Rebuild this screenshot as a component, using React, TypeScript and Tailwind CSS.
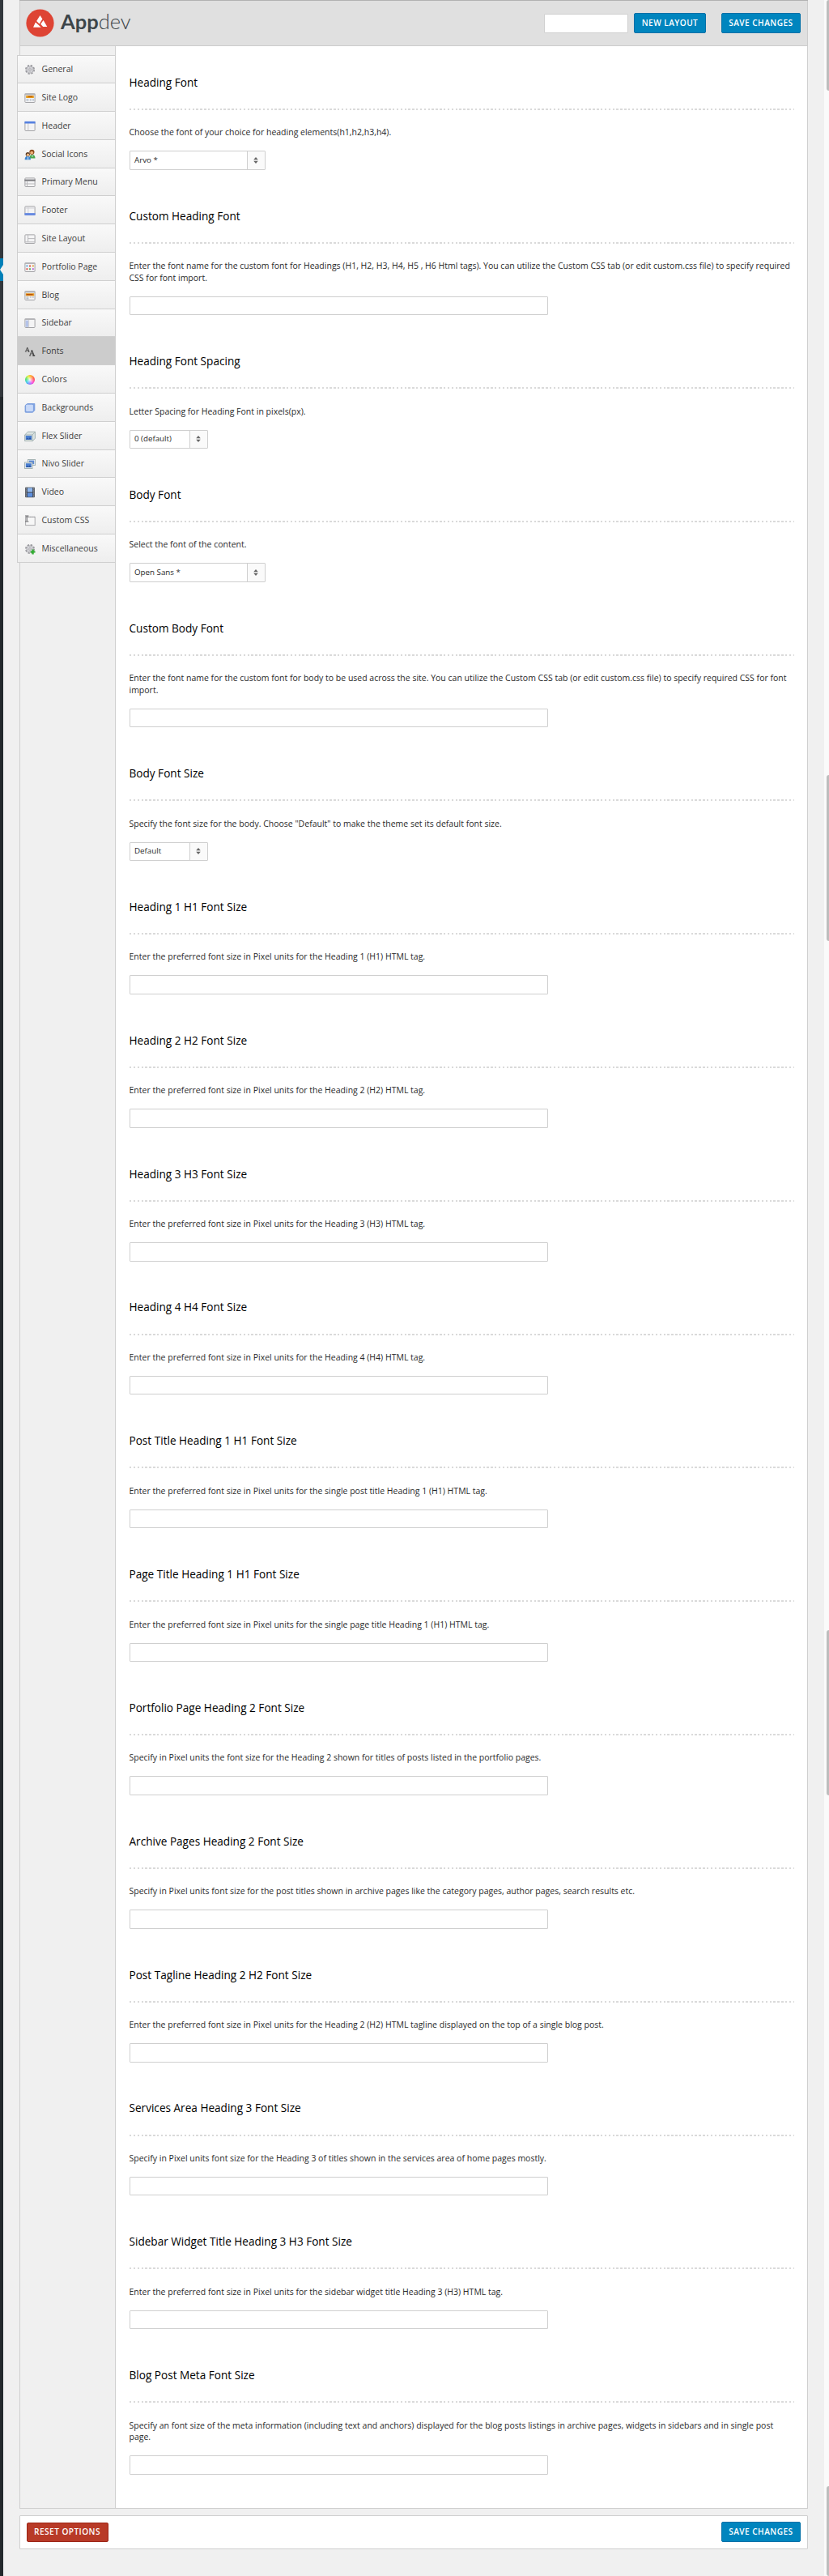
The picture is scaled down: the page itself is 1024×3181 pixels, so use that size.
import type { ReactNode } from "react";

type Section = {
  title: string;
  lines: string[];
  select?: string;
  wide?: boolean;
};

const sections: Section[] = [
  { title: "Heading Font", lines: ["Choose the font of your choice for heading elements(h1,h2,h3,h4)."], select: "Arvo *", wide: true },
  {
    title: "Custom Heading Font",
    lines: [
      "Enter the font name for the custom font for Headings (H1, H2, H3, H4, H5 , H6 Html tags). You can utilize the Custom CSS tab (or edit custom.css file) to specify required",
      "CSS for font import.",
    ],
  },
  { title: "Heading Font Spacing", lines: ["Letter Spacing for Heading Font in pixels(px)."], select: "0 (default)" },
  { title: "Body Font", lines: ["Select the font of the content."], select: "Open Sans *", wide: true },
  {
    title: "Custom Body Font",
    lines: [
      "Enter the font name for the custom font for body to be used across the site. You can utilize the Custom CSS tab (or edit custom.css file) to specify required CSS for font",
      "import.",
    ],
  },
  { title: "Body Font Size", lines: ['Specify the font size for the body. Choose "Default" to make the theme set its default font size.'], select: "Default" },
  { title: "Heading 1 H1 Font Size", lines: ["Enter the preferred font size in Pixel units for the Heading 1 (H1) HTML tag."] },
  { title: "Heading 2 H2 Font Size", lines: ["Enter the preferred font size in Pixel units for the Heading 2 (H2) HTML tag."] },
  { title: "Heading 3 H3 Font Size", lines: ["Enter the preferred font size in Pixel units for the Heading 3 (H3) HTML tag."] },
  { title: "Heading 4 H4 Font Size", lines: ["Enter the preferred font size in Pixel units for the Heading 4 (H4) HTML tag."] },
  { title: "Post Title Heading 1 H1 Font Size", lines: ["Enter the preferred font size in Pixel units for the single post title Heading 1 (H1) HTML tag."] },
  { title: "Page Title Heading 1 H1 Font Size", lines: ["Enter the preferred font size in Pixel units for the single page title Heading 1 (H1) HTML tag."] },
  { title: "Portfolio Page Heading 2 Font Size", lines: ["Specify in Pixel units the font size for the Heading 2 shown for titles of posts listed in the portfolio pages."] },
  { title: "Archive Pages Heading 2 Font Size", lines: ["Specify in Pixel units font size for the post titles shown in archive pages like the category pages, author pages, search results etc."] },
  { title: "Post Tagline Heading 2 H2 Font Size", lines: ["Enter the preferred font size in Pixel units for the Heading 2 (H2) HTML tagline displayed on the top of a single blog post."] },
  { title: "Services Area Heading 3 Font Size", lines: ["Specify in Pixel units font size for the Heading 3 of titles shown in the services area of home pages mostly."] },
  { title: "Sidebar Widget Title Heading 3 H3 Font Size", lines: ["Enter the preferred font size in Pixel units for the sidebar widget title Heading 3 (H3) HTML tag."] },
  {
    title: "Blog Post Meta Font Size",
    lines: [
      "Specify an font size of the meta information (including text and anchors) displayed for the blog posts listings in archive pages, widgets in sidebars and in single post",
      "page.",
    ],
  },
];

function Svg({ children }: { children: ReactNode }) {
  return (
    <svg viewBox="0 0 14 14" className="h-3.5 w-3.5 shrink-0">
      {children}
    </svg>
  );
}

/* Small window outline shared by most of the menu icons */
function Frame({ children }: { children?: ReactNode }) {
  return (
    <Svg>
      <rect x="0.9" y="1.9" width="12.2" height="10.6" rx="0.8" fill="#f4f4f5" stroke="#a3a3a6" />
      {children}
    </Svg>
  );
}

function Gear() {
  return (
    <>
      <circle cx="7" cy="7" r="5.2" fill="none" stroke="#98989d" strokeWidth="1.6" strokeDasharray="2.4 1.7" />
      <circle cx="7" cy="7" r="4.1" fill="#dcdce0" stroke="#9a9a9f" strokeWidth="0.8" />
      <circle cx="7" cy="7" r="2.6" fill="none" stroke="#b4b4b8" strokeWidth="0.8" strokeDasharray="1.4 0.8" />
      <circle cx="7" cy="7" r="1.3" fill="#f4f4f4" stroke="#8e8e93" strokeWidth="0.7" />
    </>
  );
}

function ColorWheel() {
  return (
    <span className="block h-3.5 w-3.5 shrink-0 p-[1px]">
      <span className="block h-full w-full rounded-full bg-[radial-gradient(circle,rgba(255,255,255,0.9)_0%,rgba(255,255,255,0.15)_60%,rgba(255,255,255,0)_100%),conic-gradient(#ffb000,#ff3b30_20%,#ff2bd6_38%,#8a5bff_50%,#22c3f0_64%,#2fdc5a_78%,#d8ee20_92%,#ffb000)]" />
    </span>
  );
}

const menu: { label: string; icon: ReactNode }[] = [
  { label: "General", icon: <Svg><Gear /></Svg> },
  {
    label: "Site Logo",
    icon: (
      <Frame>
        <rect x="0.6" y="1.4" width="12.8" height="2" fill="#b4b4b7" />
        <rect x="2.2" y="4" width="9.6" height="3" fill="#e49a1c" />
        <rect x="5" y="4.6" width="5" height="1.4" fill="#c4650e" />
        <path d="M2.4 8.5h3M2.4 10.4h3M6.8 8.5h2M10 8.5h2M6.8 10.4h2M10 10.4h2" stroke="#aeb8c6" />
      </Frame>
    ),
  },
  {
    label: "Header",
    icon: (
      <Frame>
        <path d="M4.8 3v9.5" stroke="#c6c6ca" />
        <rect x="0.4" y="0.9" width="13.2" height="2.6" fill="#5580e0" />
      </Frame>
    ),
  },
  {
    label: "Social Icons",
    icon: (
      <Svg>
        <path d="M6.6 11.5c0-3.5 1.2-4.6 3.2-4.6s3.7 1.2 3.7 4.6z" fill="#4aa64e" />
        <circle cx="9.4" cy="3.8" r="3.1" fill="#8b4a1b" />
        <circle cx="9.2" cy="4.6" r="1.9" fill="#efb27a" />
        <path d="M0.6 13.2c0-3 1.2-4.5 3.6-4.5s3.8 1.5 3.8 4.5z" fill="#3f86d0" />
        <circle cx="4.3" cy="6.6" r="2.6" fill="#5a3a20" />
        <circle cx="4.5" cy="7.2" r="1.7" fill="#efbb86" />
        <path d="M4.6 9.3v3.6M10 7.4v2.4" stroke="#e9f3fb" strokeWidth="0.9" />
      </Svg>
    ),
  },
  {
    label: "Primary Menu",
    icon: (
      <Frame>
        <rect x="0.4" y="3.6" width="13.2" height="2" fill="#77777b" />
        <path d="M3.5 6v6.5M1 9h12" stroke="#b9b9bc" />
      </Frame>
    ),
  },
  {
    label: "Footer",
    icon: (
      <Frame>
        <path d="M4.8 2v9M1 4h12" stroke="#d2d2d6" />
        <rect x="0.4" y="10.1" width="13.2" height="2.8" fill="#6589e2" />
      </Frame>
    ),
  },
  {
    label: "Site Layout",
    icon: (
      <Frame>
        <path d="M4.6 2v8.6M4.6 6.6h8.4M1 10.8h12" stroke="#b9b9bc" />
      </Frame>
    ),
  },
  {
    label: "Portfolio Page",
    icon: (
      <Frame>
        <rect x="0.6" y="1.4" width="12.8" height="1.6" fill="#b4b4b7" />
        <path d="M2.4 5.4h2" stroke="#5da7d8" strokeWidth="2" />
        <path d="M6 5.4h2M2.4 9.2h2" stroke="#e25045" strokeWidth="2" />
        <path d="M9.8 5.4h2" stroke="#e3a13b" strokeWidth="2" />
        <path d="M6 9.2h2" stroke="#58b368" strokeWidth="2" />
        <path d="M9.8 9.2h2" stroke="#b765cf" strokeWidth="2" />
      </Frame>
    ),
  },
  {
    label: "Blog",
    icon: (
      <Frame>
        <rect x="0.6" y="1.4" width="12.8" height="2" fill="#b4b4b7" />
        <rect x="1.8" y="4.2" width="10.4" height="3.2" fill="#e79a20" />
        <rect x="2.6" y="5" width="8" height="1.4" fill="#b8520c" />
        <path d="M2.4 9h3M2.4 10.8h3M6.8 9h1.8M9.8 9h2" stroke="#9fa8b5" />
      </Frame>
    ),
  },
  {
    label: "Sidebar",
    icon: (
      <Frame>
        <rect x="0.6" y="1.4" width="12.8" height="1.6" fill="#b4b4b7" />
        <rect x="1.6" y="3.6" width="3.4" height="8.2" fill="#b4c3e8" />
        <path d="M5.6 3v9.4" stroke="#c3c3c8" strokeWidth="0.8" />
      </Frame>
    ),
  },
  {
    label: "Fonts",
    icon: (
      <Svg>
        <g fill="none" stroke="#4a4a4a">
          <path d="M1.6 7L3.6 2.2M2.2 5.6h3M0.9 7.1h2" strokeWidth="0.8" />
          <path d="M3.5 2l2.1 5M4.4 7.1h2" strokeWidth="1.3" />
          <path d="M6.9 12L9.3 5.6M7.7 9.9h3.6M6.1 12.2h2.3" strokeWidth="0.9" />
          <path d="M9.2 5.2l2.6 6.8M10.2 12.2h3" strokeWidth="1.6" />
        </g>
      </Svg>
    ),
  },
  { label: "Colors", icon: <ColorWheel /> },
  {
    label: "Backgrounds",
    icon: (
      <Svg>
        <path d="M4 0.9h8.6l.7.7v8.2l-3 3H1.6l-1-1V3.9z" fill="#7fa2e0" />
        <rect x="1.6" y="2.2" width="9.8" height="9.4" rx="1.6" fill="#c8d9f8" stroke="#6f93d8" strokeWidth="0.7" />
      </Svg>
    ),
  },
  {
    label: "Flex Slider",
    icon: (
      <Svg>
        <path d="M4.5 1.2h8.9v8l-3 3.4H0.6V5z" fill="#dce4e2" stroke="#93a4a6" strokeWidth="0.8" />
        <path d="M10 5l3.4-3.6M10 5v7.4M0.8 5H10" stroke="#93a4a6" strokeWidth="0.7" />
        <rect x="1.7" y="6" width="7.4" height="5" fill="#4a7ed0" />
        <path d="M1.8 10.6l2-2 1.6 1.4 1.6-2 2 2.4z" fill="#2a56a2" />
      </Svg>
    ),
  },
  {
    label: "Nivo Slider",
    icon: (
      <Svg>
        <rect x="4.6" y="1.4" width="8.8" height="7.2" fill="#eef2f2" stroke="#93a4a6" strokeWidth="0.8" />
        <rect x="5.8" y="2.6" width="6.4" height="4.6" fill="#5e8ad2" />
        <rect x="0.6" y="5" width="9.4" height="7.6" fill="#eef2f2" stroke="#93a4a6" strokeWidth="0.8" />
        <rect x="1.8" y="6.2" width="7" height="5" fill="#4a7ed0" />
        <path d="M1.8 11l2-2 1.6 1.2 1.4-1.8 2 2.6z" fill="#2a56a2" />
      </Svg>
    ),
  },
  {
    label: "Video",
    icon: (
      <Svg>
        <rect x="1.2" y="0.8" width="11.6" height="12.4" rx="0.6" fill="#3f434b" />
        <rect x="3.8" y="1.4" width="6.4" height="5.2" fill="#8fb6ec" />
        <rect x="3.8" y="7.6" width="6.4" height="5" fill="#5d8fdc" />
        <path d="M2.5 1.6v11M11.5 1.6v11" stroke="#aeb3bb" strokeDasharray="1 1" />
      </Svg>
    ),
  },
  {
    label: "Custom CSS",
    icon: (
      <Svg>
        <rect x="1.6" y="2.4" width="11.6" height="10.2" fill="#f7f7f7" stroke="#aaaaad" />
        <path d="M5 2.4h8" stroke="#8f8f92" strokeDasharray="1 0.8" />
        <path d="M1 1h4.4M1 8h4.4M3.2 1v7" stroke="#6a6a6e" strokeWidth="1.1" />
      </Svg>
    ),
  },
  {
    label: "Miscellaneous",
    icon: (
      <Svg>
        <Gear />
        <path d="M10.6 7.6v5.8M7.7 10.5h5.8" stroke="#2cab2c" strokeWidth="2.2" />
      </Svg>
    ),
  },
];

function Select({ value, wide }: { value: string; wide?: boolean }) {
  return (
    <div
      className={
        "flex h-[23.5px] rounded-[1px] border border-[#cfcfcf] bg-white text-[9.75px] text-[#2a2a2a] " +
        (wide ? "w-[168.5px]" : "w-[97.5px]")
      }
    >
      <div className="flex flex-1 items-center pl-[5.5px]">{value}</div>
      <div className="flex w-[22.5px] items-center justify-center border-l border-[#cfcfcf] bg-[#fafafa]">
        <svg viewBox="0 0 6 8" className="h-2 w-1.5">
          <path d="M3 0l2.8 3.2H.2zM3 8L.2 4.8h5.6z" fill="#666" />
        </svg>
      </div>
    </div>
  );
}

function Button({ children, red }: { children: ReactNode; red?: boolean }) {
  return (
    <button
      className={
        "flex items-center justify-center rounded-[2px] border text-[10.1px] font-semibold tracking-[0.45px] whitespace-nowrap text-white " +
        (red
          ? "h-6 w-[101px] border-[#9c2415] bg-[#b83a27]"
          : "h-[25px] border-[#0070a8] bg-[#0085be] px-[8.5px]")
      }
    >
      {children}
    </button>
  );
}

function Thumb({ className }: { className: string }) {
  return <div className={"ml-[3px] shrink-0 rounded-l-[3px] bg-[#bdbdbd] " + className} />;
}

export default function App() {
  return (
    <div className="flex h-[3181px] w-[1024px] overflow-hidden bg-[#f0f0f0] font-['Open_Sans',sans-serif] text-[10.5px] text-[#2a2a2a]">
      <div className="flex w-1 shrink-0 flex-col bg-[#23282c]">
        <div className="h-[319px] bg-[#32373c]" />
        <div className="flex h-7 items-center justify-end bg-[#0080b8]">
          <svg viewBox="0 0 4 12" className="h-3 w-1">
            <path d="M4 0v12L0 6z" fill="#f0f0f0" />
          </svg>
        </div>
        <div className="h-[143px] bg-[#32373c]" />
      </div>

      <div className="ml-[17px] w-[977px] shrink-0">
        <div className="ml-[2.5px] h-px bg-[#b2b2b2]" />
        <header className="ml-[2.5px] flex h-14 items-center border-x border-b border-[#cccccc] bg-[#e0e0e0] pr-2 pl-[7.5px]">
          <svg viewBox="0 0 36 36" className="h-[35px] w-[35px]">
            <circle cx="18" cy="18" r="17.6" fill="#de4434" />
            <path d="M18 8.2l3 4.6-3.9 6.1-3.6-3.5z" fill="#fff" />
            <path d="M22.2 14.4l4.8 8.3h-5.2l-3.1-3.4z" fill="#fff" />
            <path d="M12.2 17l3.7 3.2 3.3 3.2H9.3z" fill="#fff" />
          </svg>
          <div className="-mt-1 ml-2 text-[25.5px] leading-none text-[#3d4549] font-['Lato',sans-serif]">
            <span className="font-bold">App</span>
            <span className="font-light">dev</span>
          </div>
          <div className="ml-auto flex items-center">
            <input className="h-6 w-[104px] rounded-[1px] border border-[#d0d0d0] bg-white" aria-label="Layout name" />
            <div className="ml-[7px]">
              <Button>NEW LAYOUT</Button>
            </div>
            <div className="ml-[19px]">
              <Button>SAVE CHANGES</Button>
            </div>
          </div>
        </header>

        <div className="flex h-[3040.5px]">
          <aside className="flex w-[122px] shrink-0 flex-col">
            <div className="ml-[2.5px] h-[10.5px] shrink-0 border-r border-l border-[#cfcfcf]" />
            <nav className="shrink-0 border-t border-[#cfcfcf]">
              {menu.map((item) => (
                <a
                  key={item.label}
                  className={
                    "flex h-[34.8px] items-center gap-[7.5px] border border-t-0 border-[#cfcfcf] pt-[1.5px] pl-2 text-[#404040] " +
                    (item.label === "Fonts" ? "bg-[#cccccc]" : "bg-linear-to-b from-[#f9f9f9] to-[#eeeeee]")
                  }
                >
                  {item.icon}
                  <span>{item.label}</span>
                </a>
              ))}
            </nav>
            <div className="ml-[2.5px] flex-1 border-r border-b border-l border-[#cfcfcf]" />
          </aside>

          <main className="flex-1 border-r border-b border-[#cfcfcf] bg-white pt-[32px] pr-4 pl-[16.5px]">
            {sections.map((s) => (
              <section key={s.title} className="pb-[44.05px]">
                <h2 className="flex h-[26px] items-center text-[13.6px] text-black">{s.title}</h2>
                <div className="mt-[19px] h-[2px] bg-[repeating-linear-gradient(90deg,#dadada_0,#dadada_2.4px,transparent_2.4px,transparent_4.85px)]" />
                <div className="mt-[20.3px] leading-[14.6px] whitespace-nowrap">
                  {s.lines.map((l) => (
                    <p key={l}>{l}</p>
                  ))}
                </div>
                <div className="mt-[15.4px]">
                  {s.select ? (
                    <Select value={s.select} wide={s.wide} />
                  ) : (
                    <input
                      className="block h-[23.5px] w-[517px] rounded-[1px] border border-[#cfcfcf] bg-white"
                      aria-label={s.title}
                    />
                  )}
                </div>
              </section>
            ))}
          </main>
        </div>

        <footer className="mt-2 ml-[2.5px] flex h-[42px] items-center justify-between rounded-[1px] border border-[#cfcfcf] bg-white pr-2 pl-2">
          <Button red>RESET OPTIONS</Button>
          <Button>SAVE CHANGES</Button>
        </footer>
      </div>

      <div className="ml-auto flex w-1.5 shrink-0 flex-col bg-[#fafafa]">
        <Thumb className="h-[112px]" />
        <Thumb className="mt-[845px] h-[205px]" />
        <Thumb className="mt-[851px] h-[204px]" />
        <Thumb className="mt-[853px] h-[111px]" />
      </div>
    </div>
  );
}
